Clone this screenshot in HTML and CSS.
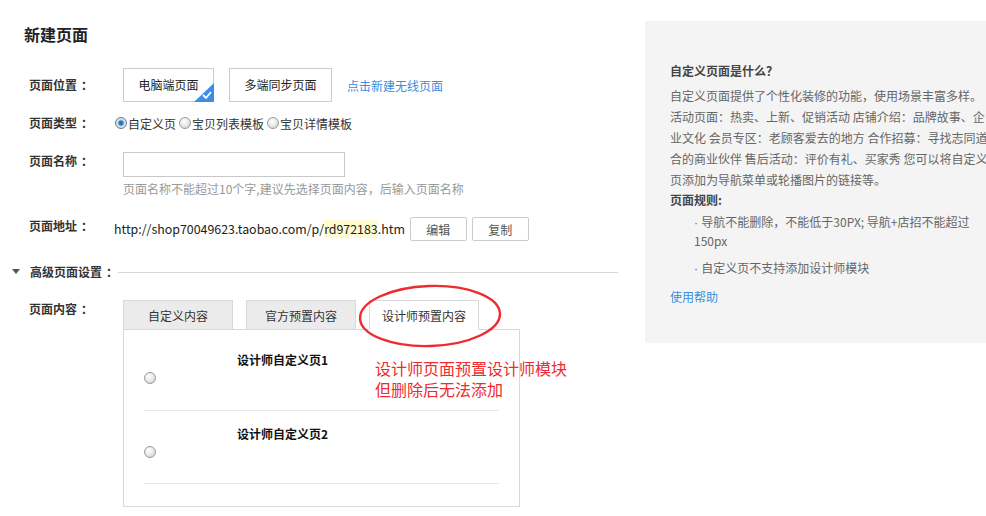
FILE: index.html
```html
<!DOCTYPE html>
<html lang="zh-CN">
<head>
    <meta charset="UTF-8">
    <title>新建页面</title>
    <link rel="stylesheet" href="styles.css">
</head>
<body>

<div class="page">
    <div class="main">
        <h1 class="title">新建页面</h1>

        <div class="form">
            <!-- 页面位置 -->
            <div class="row row-place">
                <div class="label">页面位置</div>
                <div class="field">
                    <div class="seg seg-on">电脑端页面
                        <svg class="seg-check" width="20" height="19" viewBox="0 0 20 19">
                            <polygon points="20,0 20,19 0,19" fill="#3b8de8"/>
                            <polyline points="9,12 12,15 17,9" fill="none" stroke="#fff" stroke-width="1.8"/>
                        </svg>
                    </div>
                    <div class="seg seg-wide">多端同步页面</div>
                    <a class="link" href="#">点击新建无线页面</a>
                </div>
            </div>

            <!-- 页面类型 -->
            <div class="row row-type">
                <div class="label">页面类型</div>
                <div class="field field-radios">
                    <span class="radio checked"></span><span class="radio-text">自定义页</span>
                    <span class="radio"></span><span class="radio-text">宝贝列表模板</span>
                    <span class="radio"></span><span class="radio-text">宝贝详情模板</span>
                </div>
            </div>

            <!-- 页面名称 -->
            <div class="row row-name">
                <div class="label">页面名称</div>
                <div class="field field-col">
                    <input class="input" type="text">
                    <div class="hint">页面名称不能超过10个字,建议先选择页面内容，后输入页面名称</div>
                </div>
            </div>

            <!-- 页面地址 -->
            <div class="row row-url">
                <div class="label">页面地址</div>
                <div class="field field-url">
                    <span class="url">http://shop70049623.taobao.com/p/<span class="url-mark">rd972183</span>.htm</span>
                    <button class="btn">编辑</button>
                    <button class="btn">复制</button>
                </div>
            </div>
        </div>

        <div class="advanced">
            <span class="arrow"></span>
            <span class="advanced-title">高级页面设置</span>
            <span class="advanced-line"></span>
        </div>

        <div class="form">
            <div class="row row-content">
                <div class="label">页面内容</div>
                <div class="tab-area">
                    <div class="tabs">
                        <div class="tab">自定义内容</div>
                        <div class="tab">官方预置内容</div>
                        <div class="tab tab-on">设计师预置内容</div>
                    </div>
                    <div class="tab-body">
                        <div class="item">
                            <div class="item-radio"><span class="radio"></span></div>
                            <div class="item-name">设计师自定义页1</div>
                        </div>
                        <div class="item">
                            <div class="item-radio"><span class="radio"></span></div>
                            <div class="item-name">设计师自定义页2</div>
                        </div>
                    </div>

                    <!-- 标注 -->
                    <svg class="note-ring" width="146" height="66" viewBox="0 0 146 66">
                        <ellipse cx="73" cy="33" rx="70" ry="30" fill="none" stroke="#ee2b2f" stroke-width="2.4" transform="rotate(-2 73 33)"/>
                    </svg>
                    <div class="note-text">设计师页面预置设计师模块<br>但删除后无法添加</div>
                </div>
            </div>
        </div>
    </div>

    <div class="side">
        <div class="side-title">自定义页面是什么？</div>
        <p class="side-text">自定义页面提供了个性化装修的功能，使用场景丰富多样。活动页面：热卖、上新、促销活动 店铺介绍：品牌故事、企业文化 会员专区：老顾客爱去的地方 合作招募：寻找志同道合的商业伙伴 售后活动：评价有礼、买家秀 您可以将自定义页添加为导航菜单或轮播图片的链接等。</p>
        <div class="side-title">页面规则:</div>
        <ul class="rules">
            <li>导航不能删除，不能低于30PX; 导航+店招不能超过150px</li>
            <li>自定义页不支持添加设计师模块</li>
        </ul>
        <a class="link side-link" href="#">使用帮助</a>
    </div>
</div>

</body>
</html>
```

FILE: styles.css
```css
html {
    overflow: hidden;
}

body {
    margin: 0;
    font-family: "Noto Sans CJK SC", "Liberation Sans", sans-serif;
    font-size: 12px;
    color: #333;
    background: #fff;
}

.page {
    display: flex;
    align-items: flex-start;
}

.main {
    width: 645px;
    flex: none;
}

.title {
    margin: 0;
    padding: 24px 0 0 24px;
    font-size: 16px;
    line-height: 20px;
    font-weight: bold;
    color: #222;
}

.form {
    padding-left: 29px;
}

.row {
    display: flex;
}

.label {
    width: 85px;
    flex: none;
    font-weight: bold;
    line-height: 18px;
    color: #333;
}

/* 冒号留空 */
.label::after,
.advanced-title::after {
    content: "：";
    margin-left: 4px;
}

/* 页面位置 */
.row-place {
    margin-top: 24px;
    height: 34px;
    align-items: center;
}

.field {
    display: flex;
    align-items: center;
}

.row-place .field {
    padding-left: 9px;
}

.seg {
    position: relative;
    box-sizing: border-box;
    width: 91px;
    height: 34px;
    line-height: 32px;
    border: 1px solid #ccc;
    text-align: center;
    margin-right: 15px;
    color: #222;
}

.seg-wide {
    width: 103px;
}

.seg-check {
    position: absolute;
    right: -1px;
    bottom: -1px;
}

.link {
    color: #3b8de0;
    text-decoration: none;
}

/* 页面类型 */
.row-type {
    margin-top: 10px;
    height: 22px;
    align-items: center;
}

.field-radios {
    padding-left: 1px;
}

.radio {
    display: inline-block;
    box-sizing: border-box;
    width: 12px;
    height: 12px;
    border-radius: 50%;
    border: 1px solid #9a9a9a;
    background: radial-gradient(circle at 40% 35%, #fff 0%, #e6e6e6 55%, #c4c4c4 100%);
}

.radio.checked {
    border-color: #6c7c8c;
    background: radial-gradient(circle at 50% 50%, #1f6fc0 0%, #2a7fd0 30%, #cfd8e0 45%, #eef0f2 100%);
}

.radio-text {
    margin: 0 3px 0 1px;
    color: #333;
}

/* 页面名称 */
.row-name {
    margin-top: 18px;
}

.field-col {
    flex-direction: column;
    align-items: flex-start;
    padding-left: 9px;
}

.input {
    box-sizing: border-box;
    width: 222px;
    height: 25px;
    margin: 0;
    border: 1px solid #c8c8c8;
    padding: 0 4px;
    font-family: inherit;
    font-size: 12px;
}

.hint {
    margin-top: 3px;
    line-height: 18px;
    color: #999;
}

/* 页面地址 */
.row-url {
    margin-top: 19px;
}

.url {
    line-height: 24px;
    font-size: 12.4px;
    color: #222;
}

.url-mark {
    background: #fffbd0;
}

.btn {
    box-sizing: border-box;
    width: 57px;
    height: 24px;
    margin-left: 5px;
    padding: 0;
    border: 1px solid #ccc;
    border-radius: 2px;
    background: #fff;
    font-family: inherit;
    font-size: 12px;
    color: #555;
}

/* 高级页面设置 */
.advanced {
    display: flex;
    align-items: center;
    margin: 20px 27px 0 12px;
    height: 20px;
}

.arrow {
    width: 0;
    height: 0;
    border-left: 4px solid transparent;
    border-right: 4px solid transparent;
    border-top: 5px solid #555;
    margin-right: 10px;
}

.advanced-title {
    font-weight: bold;
    color: #333;
}

.advanced-line {
    flex: 1;
    height: 1px;
    background: #d8d8d8;
    margin-left: 0;
    margin-top: 3px;
}

/* 页面内容 */
.row-content {
    margin-top: 19px;
}

.tab-area {
    position: relative;
    padding-left: 9px;
}

.tabs {
    display: flex;
    gap: 13px;
}

.tab {
    box-sizing: border-box;
    width: 110px;
    height: 30px;
    line-height: 29px;
    text-align: center;
    background: #ebebeb;
    border: 1px solid #d8d8d8;
    color: #333;
}

.tab-on {
    background: #fff;
    border-bottom-color: #fff;
    position: relative;
}

.tab-body {
    box-sizing: border-box;
    width: 397px;
    margin-top: -1px;
    border: 1px solid #d8d8d8;
    padding: 9px 20px 22px 20px;
}

.item {
    box-sizing: border-box;
    height: 73px;
    display: flex;
    padding-top: 15px;
    border-bottom: 1px solid #e8e8e8;
}

.item:first-child {
    height: 72px;
    padding-top: 13px;
}

.item-radio {
    width: 93px;
    padding-top: 18px;
}

.item-name {
    font-weight: bold;
    line-height: 16px;
    color: #111;
}

.note-ring {
    position: absolute;
    left: 243px;
    top: -17px;
}

.note-text {
    position: absolute;
    left: 261px;
    top: 58px;
    font-size: 16px;
    line-height: 21px;
    color: #ee2b2f;
    white-space: nowrap;
}

/* 右侧说明 */
.side {
    flex: none;
    width: 320px;
    margin-top: 21px;
    padding: 40px 40px 36px 25px;
    background: #f4f4f4;
    color: #666;
}

.side-title {
    font-weight: bold;
    line-height: 20px;
    color: #444;
}

.side-text {
    margin: 4px 0 0 0;
    line-height: 21px;
}

.rules {
    list-style: none;
    margin: 3px 0 0 0;
    padding: 0 0 0 24px;
}

.rules li {
    line-height: 18px;
    margin-bottom: 9px;
}

.rules li::before {
    content: "· ";
    font-family: "Liberation Sans", sans-serif;
}

.side-link {
    display: block;
    line-height: 20px;
}
```
